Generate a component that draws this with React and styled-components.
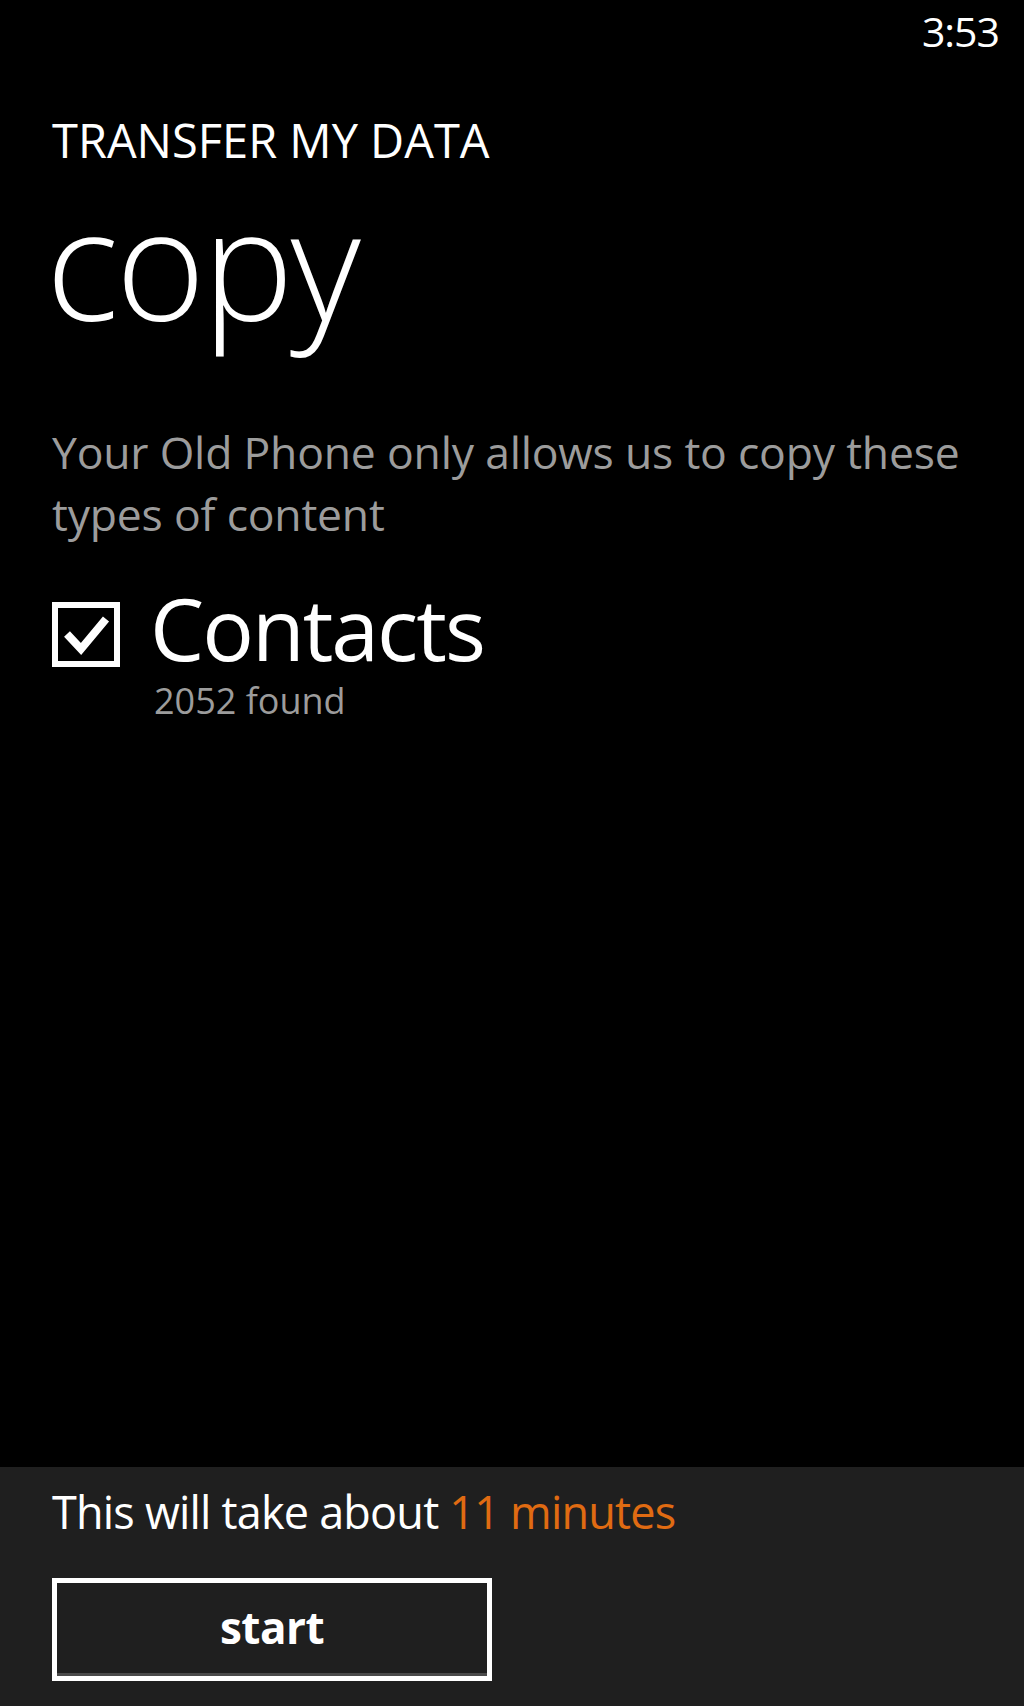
import React from 'react';
import styled, { createGlobalStyle } from 'styled-components';

const GlobalStyle = createGlobalStyle`
    html, body {
        margin: 0;
        padding: 0;
        background: #000;
    }

    #root {
        min-height: 100vh;
    }
`;

const Screen = styled.div`
    display: flex;
    flex-direction: column;
    min-height: 100vh;
    background: #000;
    color: #fff;
    font-family: "Open Sans", "Noto Sans", sans-serif;
`;

const StatusBar = styled.div`
    display: flex;
    justify-content: flex-end;
    height: 70px;
    padding: 0 25px 0 0;
`;

const Clock = styled.span`
    font-size: 41px;
    line-height: 62px;
    letter-spacing: -1px;
`;

const Content = styled.div`
    display: flex;
    flex-direction: column;
    padding: 0 30px 0 52px;
`;

const AppTitle = styled.h2`
    margin: 41px 0 0;
    font-size: 47px;
    line-height: 58px;
    font-weight: 400;
`;

const PageTitle = styled.h1`
    margin: 8px 0 0 -6px;
    font-size: 153px;
    line-height: 170px;
    font-weight: 300;
    letter-spacing: -3px;
`;

const Description = styled.p`
    margin: 74px 0 0;
    font-size: 44.5px;
    line-height: 62px;
    color: #9c9c9c;
    letter-spacing: -0.2px;
`;

const Option = styled.label`
    display: flex;
    align-items: flex-start;
    gap: 34px;
    margin-top: 38px;
`;

const Box = styled.span`
    flex: none;
    display: flex;
    align-items: center;
    justify-content: center;
    box-sizing: border-box;
    width: 68px;
    height: 65px;
    margin-top: 19px;
    border: 6px solid #fff;

    svg {
        display: block;
    }
`;

const OptionText = styled.div`
    display: flex;
    flex-direction: column;
`;

const OptionName = styled.span`
    font-size: 86px;
    line-height: 90px;
    letter-spacing: -2px;
    margin-left: -4px;
`;

const OptionMeta = styled.span`
    margin-top: 8px;
    font-size: 36px;
    line-height: 40px;
    color: #9c9c9c;
`;

const BottomBar = styled.div`
    margin-top: auto;
    display: flex;
    flex-direction: column;
    align-items: flex-start;
    height: 239px;
    box-sizing: border-box;
    padding: 17px 0 0 52px;
    background: #1f1f1f;
`;

const Estimate = styled.p`
    margin: 0;
    font-size: 45px;
    line-height: 56px;
    letter-spacing: -0.8px;
    color: #fff;
`;

const Accent = styled.span`
    color: #e06b12;
`;

const StartButton = styled.button`
    margin: 38px 0 0 0;
    width: 440px;
    height: 103px;
    box-sizing: border-box;
    border: 5px solid #fff;
    background: #1f1f1f;
    box-shadow: inset 0 -3px 0 #4a4a4a;
    color: #fff;
    font-family: "Open Sans", "Noto Sans", sans-serif;
    font-size: 44px;
    font-weight: 700;
    letter-spacing: -0.5px;
    line-height: 1;
    padding: 0 0 6px;
`;

const CheckMark = () => (
    <svg width="48" height="42" viewBox="0 0 48 42">
        <path d="M5 20 L19 35 L44 5" fill="none" stroke="#fff" strokeWidth="8" strokeLinejoin="miter" />
    </svg>
);

export default function App() {
    return (
        <>
            <GlobalStyle />
            <Screen>
                <StatusBar>
                    <Clock>3:53</Clock>
                </StatusBar>
                <Content>
                    <AppTitle>TRANSFER MY DATA</AppTitle>
                    <PageTitle>copy</PageTitle>
                    <Description>
                        Your Old Phone only allows us to copy these<br />
                        types of content
                    </Description>
                    <Option>
                        <Box>
                            <CheckMark />
                        </Box>
                        <OptionText>
                            <OptionName>Contacts</OptionName>
                            <OptionMeta>2052 found</OptionMeta>
                        </OptionText>
                    </Option>
                </Content>
                <BottomBar>
                    <Estimate>
                        This will take about <Accent>11 minutes</Accent>
                    </Estimate>
                    <StartButton type="button">start</StartButton>
                </BottomBar>
            </Screen>
        </>
    );
}
